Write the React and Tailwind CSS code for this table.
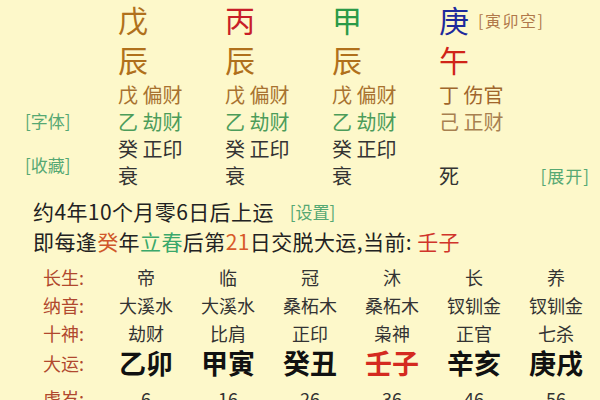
const stems = [
  { gan: "戊", ganColor: "text-[#b0701c]", zhi: "辰", zhiColor: "text-[#b0701c]" },
  { gan: "丙", ganColor: "text-[#c81e28]", zhi: "辰", zhiColor: "text-[#b0701c]" },
  { gan: "甲", ganColor: "text-[#2a9a48]", zhi: "辰", zhiColor: "text-[#b0701c]" },
];

const hidden = [
  { a: "戊", b: "偏财", color: "text-[#a87230]" },
  { a: "乙", b: "劫财", color: "text-[#4c9c5a]" },
  { a: "癸", b: "正印", color: "text-[#333]" },
];

const table = [
  { label: "长生:", values: ["帝", "临", "冠", "沐", "长", "养"] },
  { label: "纳音:", values: ["大溪水", "大溪水", "桑柘木", "桑柘木", "钗钏金", "钗钏金"] },
  { label: "十神:", values: ["劫财", "比肩", "正印", "枭神", "正官", "七杀"] },
];

const dayun = ["乙卯", "甲寅", "癸丑", "壬子", "辛亥", "庚戌"];
const ages = ["6", "16", "26", "36", "46", "56"];

const HiddenRow = ({ a, b, color }) => (
  <div className={`h-[27px] leading-[27px] text-[20px] ${color}`}>
    {a} {b}
  </div>
);

const Pillar = ({ gan, ganColor, zhi, zhiColor }) => (
  <div className="w-[107px] flex flex-col">
    <div className={`h-[39px] leading-[39px] text-[30px] ${ganColor}`}>{gan}</div>
    <div className={`h-[40px] leading-[40px] text-[30px] ${zhiColor}`}>{zhi}</div>
    <div className="mt-[2px]">
      {hidden.map((h) => (
        <HiddenRow key={h.a} {...h} />
      ))}
      <div className="h-[27px] leading-[27px] text-[20px] text-[#333]">衰</div>
    </div>
  </div>
);

export default function App() {
  return (
    <div
      className="w-[600px] h-[400px] overflow-hidden bg-[#fdf8ca] text-[#222]"
      style={{ fontFamily: '"Noto Sans CJK SC", "Noto Sans", sans-serif' }}
    >
      <div className="flex pl-[25px] pr-[10px]">
        <div className="w-[93px] flex flex-col pt-[107px] text-[17px] text-[#56a873]">
          <div className="h-[27px] leading-[27px]">[字体]</div>
          <div className="h-[27px] leading-[27px] mt-[17px]">[收藏]</div>
        </div>
        {stems.map((s) => (
          <Pillar key={s.gan} {...s} />
        ))}
        <div className="flex-1 flex flex-col">
          <div className="h-[39px] flex items-center gap-[9px]">
            <span className="text-[30px] leading-[39px] text-[#1d2a9c]">庚</span>
            <span className="text-[16px] tracking-[1.5px] text-[#b0784a]">[寅卯空]</span>
          </div>
          <div className="h-[40px] leading-[40px] text-[30px] text-[#d02418]">午</div>
          <div className="mt-[2px]">
            <HiddenRow a="丁" b="伤官" color="text-[#a0662c]" />
            <div className="h-[27px] leading-[27px] text-[20px] text-[#a88050]">
              己 正财
            </div>
            <div className="h-[27px]" />
            <div className="h-[27px] flex items-center justify-between">
              <span className="text-[20px] text-[#333]">死</span>
              <span className="text-[17px] tracking-[1px] text-[#56a873]">[展开]</span>
            </div>
          </div>
        </div>
      </div>

      <div className="pl-[33px] mt-[8px] tracking-[0.4px]">
        <div className="h-[30px] flex items-center">
          <span className="text-[21px]">约4年10个月零6日后上运</span>
          <span className="ml-[16px] text-[17px] tracking-normal text-[#56a873]">[设置]</span>
        </div>
        <div className="h-[30px] flex items-center text-[21px]">
          <span>
            即每逢<span className="text-[#d0582a]">癸</span>年
            <span className="text-[#3aa86a]">立春</span>后第
            <span className="text-[#d85a2a]">21</span>日交脱大运,当前:{" "}
            <span className="text-[#d0342a]">壬子</span>
          </span>
        </div>
      </div>

      <div className="pl-[43px] mt-[6px] grid grid-cols-[62px_repeat(6,82px)]">
        {table.map((row) => (
          <div key={row.label} className="contents">
            <div className="h-[28px] leading-[28px] text-[18px] text-[#b0482e]">{row.label}</div>
            {row.values.map((v, i) => (
              <div key={i} className="h-[28px] leading-[28px] text-[18px] text-center text-[#333]">
                {v}
              </div>
            ))}
          </div>
        ))}
        <div className="h-[32px] leading-[32px] text-[18px] text-[#b0482e]">大运:</div>
        {dayun.map((d) => (
          <div
            key={d}
            className={`h-[32px] leading-[32px] text-[27px] font-bold text-center ${
              d === "壬子" ? "text-[#d42a20]" : "text-[#111]"
            }`}
          >
            {d}
          </div>
        ))}
        <div className="mt-[5px] h-[28px] leading-[28px] text-[18px] text-[#b0482e]">虚岁:</div>
        {ages.map((a) => (
          <div key={a} className="mt-[5px] h-[28px] leading-[28px] text-[18px] text-center text-[#333]">
            {a}
          </div>
        ))}
      </div>
    </div>
  );
}
